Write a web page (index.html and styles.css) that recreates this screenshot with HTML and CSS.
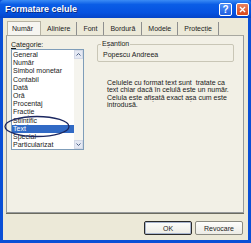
FILE: index.html
```html
<!DOCTYPE html>
<html lang="ro">
<head>
  <meta charset="UTF-8">
  <title>Formatare celule</title>
  <link rel="stylesheet" href="styles.css">
</head>
<body>
  <div class="window">
    <div class="titlebar">
      <span class="title">Formatare celule</span>
      <div class="ctrls">
        <span class="cbtn help">?</span>
        <span class="cbtn close">
          <svg width="13" height="13" viewBox="0 0 13 13"><path d="M3.5 3.5 L9.5 9.5 M9.5 3.5 L3.5 9.5" stroke="#fff" stroke-width="1.6" fill="none"/></svg>
        </span>
      </div>
    </div>

    <div class="client">
      <div class="tabs">
        <span class="tab active">Număr</span>
        <span class="tab">Aliniere</span>
        <span class="tab">Font</span>
        <span class="tab">Bordură</span>
        <span class="tab">Modele</span>
        <span class="tab">Protecție</span>
      </div>

      <div class="panel">
        <div class="left">
          <div class="label"><u>C</u>ategorie:</div>
          <div class="listbox">
            <ul class="items">
              <li>General</li>
              <li>Număr</li>
              <li>Simbol monetar</li>
              <li>Contabil</li>
              <li>Dată</li>
              <li>Oră</li>
              <li>Procentaj</li>
              <li>Fracție</li>
              <li>Științific</li>
              <li class="sel">Text</li>
              <li>Special</li>
              <li>Particularizat</li>
            </ul>
            <div class="scroll">
              <span class="arrow"><svg width="7" height="7" viewBox="0 0 7 7"><path d="M1.5 4.5 L3.5 2.5 L5.5 4.5" stroke="#4d6185" fill="none"/></svg></span>
              <span class="track"></span>
              <span class="arrow"><svg width="7" height="7" viewBox="0 0 7 7"><path d="M1.5 2.5 L3.5 4.5 L5.5 2.5" stroke="#4d6185" fill="none"/></svg></span>
            </div>
          </div>
        </div>

        <div class="right">
          <div class="sample">
            <span class="legend">Eșantion</span>
            <span class="value">Popescu Andreea</span>
          </div>
          <p class="desc">Celulele cu format text sunt&nbsp; tratate ca<br>text chiar dacă în celulă este un număr.<br>Celula este afișată exact așa cum este<br>introdusă.</p>
        </div>
      </div>

      <div class="footer">
        <button class="btn default">OK</button>
        <button class="btn">Revocare</button>
      </div>
    </div>

    <!-- cercul desenat peste lista -->
    <svg class="ring" width="70" height="26" viewBox="0 0 70 26">
      <ellipse cx="34" cy="12.5" rx="32" ry="10" fill="none" stroke="#1b2760" stroke-width="1.3"/>
    </svg>
  </div>
</body>
</html>
```

FILE: styles.css
```css
html, body { margin: 0; padding: 0; }
body { width: 251px; height: 243px; overflow: hidden; font-family: "Liberation Sans", Arial, sans-serif; font-size: 7px; color: #1a1a1a; }

.window { position: relative; width: 251px; height: 243px; display: flex; flex-direction: column; background: #0a4fd6; }

.titlebar { height: 18px; display: flex; align-items: center; justify-content: space-between; padding: 0 2px 0 5px; background: linear-gradient(#3b8cf5 0%, #0a5de6 25%, #0552e0 70%, #0444c8 100%); border-radius: 4px 4px 0 0; }
.title { color: #fff; font-weight: bold; font-size: 9px; text-shadow: 1px 1px 0 #0a2a80; }
.ctrls { display: flex; gap: 4px; }
.cbtn { width: 13px; height: 13px; box-sizing: border-box; border: 1px solid #fff; border-radius: 2px; display: flex; align-items: center; justify-content: center; color: #fff; font-weight: bold; font-size: 10px; }
.help { background: linear-gradient(#4c8ef8, #1f5fe0); }
.close { background: linear-gradient(#e8825f, #d9471b); }
.close svg { display: block; }

.client { flex: 1; margin: 0 3px 3px 3px; background: #ece9d8; padding: 4px 4px 0 3px; display: flex; flex-direction: column; }

.tabs { display: flex; height: 13px; padding-left: 1px; }
.tab { display: flex; align-items: center; padding: 0 6px; border-right: 1px solid #8e8f8f; font-size: 7px; color: #222; }
.tab.active { background: #f6f5f0; border: 1px solid #b7b3a3; border-bottom: none; margin-top: -1px; padding: 0 7px 0 4px; }

.panel { position: relative; height: 178px; box-sizing: border-box; border: 1px solid #979a9b; border-top-color: #a8a8a0; background: #f2f0e6; display: flex; padding: 5px 9px 0 4px; gap: 13px; box-shadow: 0 1px 0 #6b6b60; }

.left { width: 73px; }
.label { font-size: 7px; margin-bottom: 0; line-height: 8px; }
.listbox { display: flex; width: 73px; height: 101px; box-sizing: border-box; border: 1px solid #7f9db9; background: #fff; }
.items { list-style: none; margin: 0; padding: 1px 0 0 0; flex: 1; }
.items li { height: 8.2px; line-height: 8.2px; padding-left: 1px; font-size: 7px; white-space: nowrap; overflow: hidden; }
.items li.sel { background: #316ac5; color: #fff; }
.scroll { width: 9px; display: flex; flex-direction: column; background: #f5f4ee; }
.arrow { height: 9px; box-sizing: border-box; border: 1px solid #d4d9e6; background: #e4e8f3; display: flex; align-items: center; justify-content: center; }
.track { flex: 1; }

.right { flex: 1; display: flex; flex-direction: column; }
.sample { position: relative; margin-top: 3px; height: 18px; box-sizing: border-box; border: 1px solid #c9c6b6; border-radius: 2px; display: flex; align-items: center; padding-left: 5px; }
.legend { position: absolute; top: -5px; left: 3px; background: #f2f0e6; padding: 0 1px; font-size: 7px; line-height: 8px; }
.value { font-size: 7px; padding-top: 2px; }
.desc { margin: 17px 0 0 10px; white-space: nowrap; font-size: 7px; line-height: 7.3px; }

.footer { display: flex; justify-content: flex-end; gap: 3px; padding: 8px 1px 0 0; }
.btn { width: 48px; height: 14px; box-sizing: border-box; font-family: "Liberation Sans", Arial, sans-serif; font-size: 7px; color: #222; background: linear-gradient(#fdfdfb, #ecebe5); border: 1px solid #8a8a80; border-radius: 2px; padding: 0; }
.btn.default { border: 1px solid #2a2a2a; box-shadow: inset 0 0 0 1px #a9b6cf; }

.ring { position: absolute; left: 3px; top: 114px; }
```
